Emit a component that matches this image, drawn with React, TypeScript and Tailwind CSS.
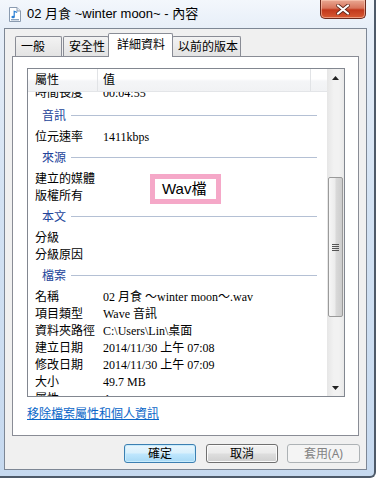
import React from "react";

const sans = '"Noto Sans", "Noto Sans CJK TC", sans-serif';
const serif = '"Liberation Serif", "Noto Sans CJK TC", serif';

type Row =
  | { type: "data"; label: string; value?: string }
  | { type: "group"; label: string };

const rows: Row[] = [
  { type: "data", label: "時間長度", value: "00:04:55" },
  { type: "group", label: "音訊" },
  { type: "data", label: "位元速率", value: "1411kbps" },
  { type: "group", label: "來源" },
  { type: "data", label: "建立的媒體" },
  { type: "data", label: "版權所有" },
  { type: "group", label: "本文" },
  { type: "data", label: "分級" },
  { type: "data", label: "分級原因" },
  { type: "group", label: "檔案" },
  { type: "data", label: "名稱", value: "02 月食 ～winter moon～.wav" },
  { type: "data", label: "項目類型", value: "Wave 音訊" },
  { type: "data", label: "資料夾路徑", value: "C:\\Users\\Lin\\桌面" },
  { type: "data", label: "建立日期", value: "2014/11/30 上午 07:08" },
  { type: "data", label: "修改日期", value: "2014/11/30 上午 07:09" },
  { type: "data", label: "大小", value: "49.7 MB" },
  { type: "data", label: "屬性", value: "A" },
  { type: "data", label: "離線可用性" },
];

function DocIcon() {
  return (
    <svg width="12" height="15" viewBox="0 0 12 15">
      <path d="M0.5 0.5 H8 L11.5 4 V14.5 H0.5 Z" fill="#ffffff" stroke="#8a9bb0" />
      <path d="M8 0.5 V4 H11.5" fill="#e3eaf3" stroke="#8a9bb0" />
      <path d="M5.2 9.8 V4.3 L8.2 5.4" stroke="#2a7fd4" strokeWidth="1.2" fill="none" />
      <ellipse cx="4.1" cy="10" rx="1.7" ry="1.3" fill="#2a7fd4" />
      <rect x="2" y="12" width="8" height="1.4" fill="#8aa4c0" />
    </svg>
  );
}

function CloseButton() {
  return (
    <div className="absolute top-0 right-[8px] w-[46px] h-[19px] rounded-b-[5px] border border-t-0 border-[#6b2a1e] bg-[linear-gradient(to_bottom,#e9a893_0%,#d8745c_45%,#c2381c_55%,#d75a33_100%)] flex items-center justify-center shadow-[inset_0_0_0_1px_rgba(255,210,190,0.55)]">
      <svg width="14" height="11" viewBox="0 0 14 11">
        <path d="M2 1.5 L12 9.5 M12 1.5 L2 9.5" stroke="#5a2418" strokeWidth="3.6" strokeLinecap="round" />
        <path d="M2 1.5 L12 9.5 M12 1.5 L2 9.5" stroke="#ffffff" strokeWidth="2.2" strokeLinecap="round" />
      </svg>
    </div>
  );
}

function Tab({ label, selected, className }: { label: string; selected?: boolean; className: string }) {
  if (selected) {
    return (
      <div
        className={`relative z-10 h-[24px] -mb-px bg-white border border-b-0 border-[#898c95] rounded-t-[2px] flex items-start pt-[3px] pl-[8px] text-[12px] leading-[16px] text-black ${className}`}
      >
        {label}
      </div>
    );
  }
  return (
    <div
      className={`h-[20px] bg-[linear-gradient(to_bottom,#f3f3f3,#e3e3e3)] border border-b-0 border-[#898c95] rounded-t-[2px] flex items-start pt-[2px] pl-[5px] text-[12px] leading-[16px] text-black ${className}`}
    >
      {label}
    </div>
  );
}

function ListRow({ row, first }: { row: Row; first?: boolean }) {
  if (row.type === "group") {
    return (
      <div className="h-[25px] flex items-center pl-[14px] pr-[10px]">
        <span className="text-[12px] leading-[14px] text-[#23449a]" style={{ fontFamily: sans }}>
          {row.label}
        </span>
        <div className="flex-1 ml-[5px] h-px bg-[#b4c0d4]" />
      </div>
    );
  }
  return (
    <div
      className={`h-[17px] flex text-[12px] leading-[14px] text-black ${first ? "items-start" : "items-center"}`}
    >
      <div className="w-[75px] shrink-0 pl-[7px] whitespace-nowrap" style={{ fontFamily: sans }}>
        {row.label}
      </div>
      <div className="whitespace-nowrap" style={{ fontFamily: serif }}>
        {row.value ?? ""}
      </div>
    </div>
  );
}

function Scrollbar() {
  return (
    <div className="w-[17px] shrink-0 bg-[linear-gradient(to_right,#e6e6e6,#f2f2f2_40%,#f2f2f2_70%,#e9e9e9)] flex flex-col">
      <div className="h-[17px] flex items-center justify-center">
        <svg width="7" height="4" viewBox="0 0 7 4">
          <path d="M0 4 L3.5 0 L7 4 Z" fill="#222" />
        </svg>
      </div>
      <div className="h-[91px]" />
      <div className="ml-[1px] w-[15px] h-[140px] rounded-[2px] border border-[#9a9a9a] bg-[linear-gradient(to_right,#f6f6f6,#ececec_45%,#d9d9d9_55%,#cdcdcd)] flex items-center justify-center">
        <div className="flex flex-col gap-[1px]">
          <div className="w-[7px] h-px bg-[#555]" />
          <div className="w-[7px] h-px bg-[#555]" />
          <div className="w-[7px] h-px bg-[#555]" />
          <div className="w-[7px] h-px bg-[#555]" />
        </div>
      </div>
      <div className="flex-1" />
      <div className="h-[17px] flex items-center justify-center">
        <svg width="7" height="4" viewBox="0 0 7 4">
          <path d="M0 0 L3.5 4 L7 0 Z" fill="#222" />
        </svg>
      </div>
    </div>
  );
}

export default function App() {
  return (
    <div className="w-[376px] h-[479px] bg-white overflow-hidden" style={{ fontFamily: sans }}>
      <div className="relative w-[376px] h-[478px] border-r-[2px] border-b-[2px] border-[#4e5a69] rounded-br-[6px] bg-[linear-gradient(to_bottom,#f3f7fc_0px,#e6eef8_30px,#d3e2f3_200px,#c6d9ef_479px)] flex flex-col">
        {/* title bar */}
        <div className="h-[28px] shrink-0 flex items-center pl-[9px]">
          <DocIcon />
          <span
            className="ml-[6px] text-[13px] leading-[16px] text-black whitespace-nowrap"
            style={{ fontFamily: '"Liberation Sans", "Noto Sans CJK TC", sans-serif' }}
          >
            02 月食 ~winter moon~ - 內容
          </span>
        </div>
        <CloseButton />

        {/* client area */}
        <div className="ml-[4px] mr-[7px] h-[442px] border border-[#7d8795] bg-[#f0f0f0] flex flex-col">
          {/* tabs */}
          <div className="h-[27px] shrink-0 flex items-end pl-[10px]">
            <Tab label="一般" className="w-[47px]" />
            <Tab label="安全性" className="ml-[1px] w-[46px]" />
            <Tab label="詳細資料" selected className="-ml-[1px] w-[65px]" />
            <Tab label="以前的版本" className="-ml-[1px] w-[69px]" />
          </div>

          {/* tab panel */}
          <div className="mx-[7px] h-[380px] shrink-0 border border-[#898c95] bg-white flex flex-col">
            {/* list box */}
            <div className="ml-[14px] mt-[11px] w-[318px] h-[329px] border border-[#828790] bg-white flex">
              <div className="flex-1 flex flex-col overflow-hidden">
                <div className="h-[23px] shrink-0 flex bg-[linear-gradient(to_bottom,#ffffff,#ffffff_45%,#f4f5f7_55%,#f1f2f4)] border-b border-[#e3e5e8] text-[12px] text-black">
                  <div className="w-[70px] border-r border-[#e1e3e6] pl-[7px] flex items-center">屬性</div>
                  <div className="w-[213px] border-r border-[#e1e3e6] pl-[5px] flex items-center">值</div>
                  <div className="flex-1" />
                </div>
                <div className="flex-1 overflow-hidden">
                  <div className="-mt-[6px]">
                    {rows.map((r, i) => (
                      <ListRow key={i} row={r} first={i === 0} />
                    ))}
                  </div>
                </div>
              </div>
              <Scrollbar />
            </div>

            <div className="ml-[14px] mt-[9px] text-[12px] leading-[16px] text-[#0a66c8] underline whitespace-nowrap">
              移除檔案屬性和個人資訊
            </div>
          </div>

          {/* buttons */}
          <div className="mt-[8px] mr-[6px] flex justify-end text-[12px]">
            <div className="w-[72px] h-[19px] rounded-[3px] border border-[#3c7fb1] bg-[linear-gradient(to_bottom,#eaf6fd,#d9f0fc_45%,#bee6fd_55%,#a7d9f5)] shadow-[inset_0_0_0_1px_#c8ecfd] flex items-center justify-center text-black">
              確定
            </div>
            <div className="ml-[10px] w-[72px] h-[19px] rounded-[3px] border border-[#707070] bg-[linear-gradient(to_bottom,#f2f2f2,#ebebeb_45%,#dddddd_55%,#cfcfcf)] shadow-[inset_0_0_0_1px_#fbfbfb] flex items-center justify-center text-black">
              取消
            </div>
            <div className="ml-[9px] w-[73px] h-[19px] rounded-[3px] border border-[#adb2b5] bg-[#f4f4f4] flex items-center justify-center text-[#838383]">
              套用(A)
            </div>
          </div>
        </div>

        {/* annotation */}
        <div className="absolute left-[150px] top-[174px] w-[71px] h-[30px] border-[5px] border-[#f5a8c8] bg-white flex items-center pl-[7px] text-[15px] leading-[18px] text-black" style={{ fontFamily: '"Liberation Sans", "Noto Sans CJK TC", sans-serif' }}>
          Wav檔
        </div>
      </div>
    </div>
  );
}
